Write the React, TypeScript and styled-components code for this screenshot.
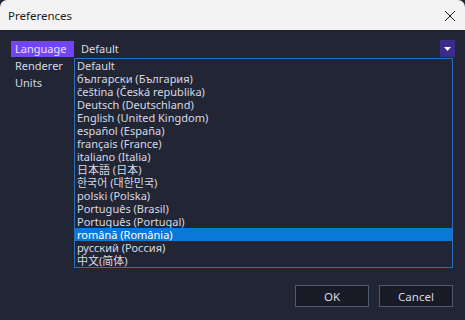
import React from "react";
import styled, { createGlobalStyle } from "styled-components";

const Global = createGlobalStyle`
  html, body { margin: 0; padding: 0; background: #222634; }
  body { font-family: "Noto Sans", "Noto Sans CJK JP", sans-serif; }
`;

const Window = styled.div`
  width: 465px;
  height: 320px;
  display: flex;
  flex-direction: column;
  background: #222634;
  overflow: hidden;
`;

const TitleBar = styled.div`
  height: 30px;
  flex: none;
  background: #f3f3f3;
  display: flex;
  align-items: center;
  justify-content: space-between;
  padding: 0 8px 0 8px;
  border-radius: 7px 7px 0 0;
  font-size: 11.5px;
  color: #1b1b1b;
`;

const Title = styled.span`
  margin-top: 1px;
`;

const CloseBtn = styled.div`
  width: 14px;
  height: 14px;
  display: flex;
  align-items: center;
  justify-content: center;
  margin-top: 1px;
`;

const Body = styled.div`
  flex: 1;
  display: flex;
  flex-direction: column;
  padding: 10px 10px 13px 11px;
  color: #d6d9e4;
  font-size: 11px;
`;

const Main = styled.div`
  flex: 1;
  display: flex;
  gap: 1px;
`;

const Sidebar = styled.div`
  width: 63px;
  display: flex;
  flex-direction: column;
  padding-top: 1px;
  gap: 1px;
`;

const SideItem = styled.div<{ $active?: boolean }>`
  height: 16px;
  line-height: 15px;
  padding-left: 4px;
  background: ${(p) => (p.$active ? "#7245f2" : "transparent")};
  color: ${(p) => (p.$active ? "#e6e2ff" : "#d6d9e4")};
`;

const Combo = styled.div`
  flex: 1;
  position: relative;
  height: 17px;
`;

const ComboValue = styled.div`
  height: 17px;
  display: flex;
  align-items: center;
  justify-content: space-between;
  padding-left: 6px;
`;

const Arrow = styled.div`
  width: 15px;
  height: 17px;
  background: #3a2c8c;
  display: flex;
  align-items: center;
  justify-content: center;
`;

const List = styled.div`
  position: absolute;
  left: -1px;
  right: 2px;
  top: 18px;
  border: 1px solid #2a70bd;
  background: #222634;
  display: flex;
  flex-direction: column;
`;

const Option = styled.div<{ $selected?: boolean }>`
  height: 13px;
  line-height: 13px;
  padding-left: 2px;
  white-space: nowrap;
  background: ${(p) => (p.$selected ? "#0a78d7" : "transparent")};
  color: ${(p) => (p.$selected ? "#ffffff" : "#d6d9e4")};
`;

const Footer = styled.div`
  display: flex;
  justify-content: flex-end;
  gap: 10px;
  padding-right: 2px;
`;

const Button = styled.div`
  width: 72px;
  height: 20px;
  border: 1px solid #4b5878;
  background: #191c27;
  color: #d6d9e4;
  display: flex;
  align-items: center;
  justify-content: center;
  font-size: 11.5px;
`;

const options = [
  "Default",
  "български (България)",
  "čeština (Česká republika)",
  "Deutsch (Deutschland)",
  "English (United Kingdom)",
  "español (España)",
  "français (France)",
  "italiano (Italia)",
  "日本語 (日本)",
  "한국어 (대한민국)",
  "polski (Polska)",
  "Português (Brasil)",
  "Português (Portugal)",
  "română (România)",
  "русский (Россия)",
  "中文(简体)",
];

export default function App() {
  return (
    <>
      <Global />
      <Window>
        <TitleBar>
          <Title>Preferences</Title>
          <CloseBtn>
            <svg width="12" height="12" viewBox="0 0 12 12">
              <path d="M1 1 L11 11 M11 1 L1 11" stroke="#1b1b1b" strokeWidth="1" />
            </svg>
          </CloseBtn>
        </TitleBar>
        <Body>
          <Main>
            <Sidebar>
              <SideItem $active>Language</SideItem>
              <SideItem>Renderer</SideItem>
              <SideItem>Units</SideItem>
            </Sidebar>
            <Combo>
              <ComboValue>
                <span>Default</span>
                <Arrow>
                  <svg width="7" height="4" viewBox="0 0 7 4">
                    <path d="M0 0 H7 L3.5 4 Z" fill="#ffffff" />
                  </svg>
                </Arrow>
              </ComboValue>
              <List>
                {options.map((o) => (
                  <Option key={o} $selected={o === "română (România)"}>
                    {o}
                  </Option>
                ))}
              </List>
            </Combo>
          </Main>
          <Footer>
            <Button>OK</Button>
            <Button>Cancel</Button>
          </Footer>
        </Body>
      </Window>
    </>
  );
}
